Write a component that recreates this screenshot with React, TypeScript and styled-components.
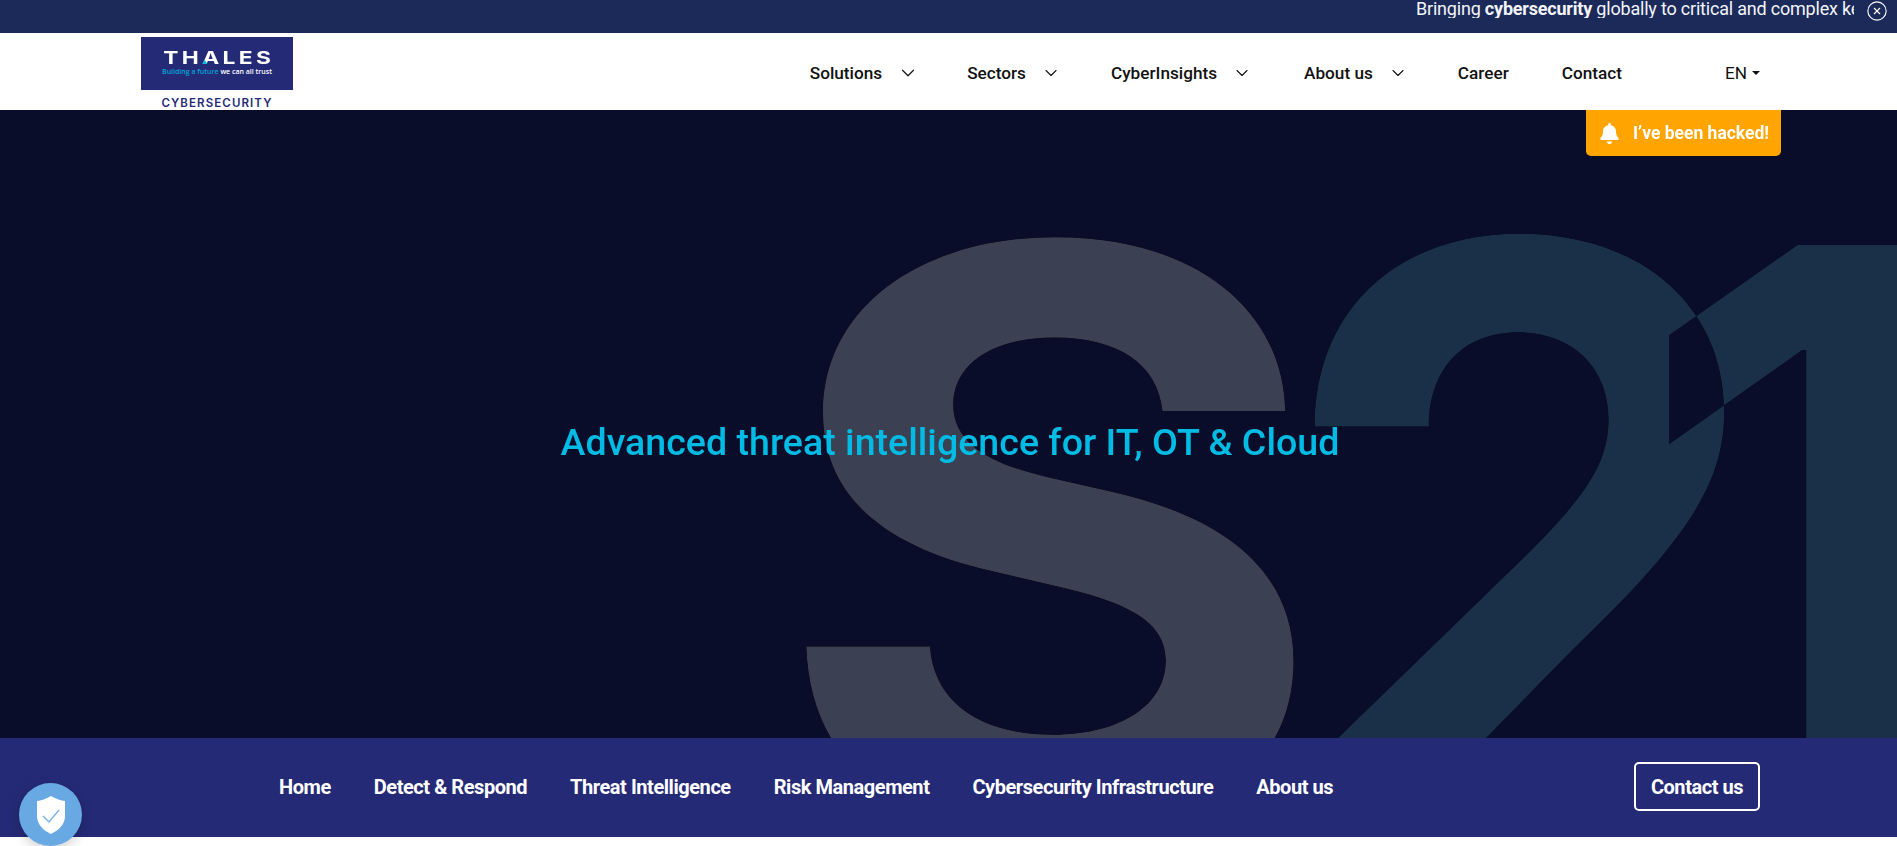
import { createGlobalStyle, styled } from "styled-components";
import { ChevronDown, CircleX } from "lucide-react";
import { FaBell } from "react-icons/fa";

const GlobalStyle = createGlobalStyle`
  html, body {
    margin: 0;
    padding: 0;
    height: 846px;
    overflow: hidden;
    background: #fff;
    font-family: Roboto, "Liberation Sans", sans-serif;
  }
  * {
    box-sizing: border-box;
  }
`;

const TopBar = styled.div`
  display: flex;
  justify-content: flex-end;
  align-items: center;
  height: 33px;
  padding-right: 9px;
  background: #1c2a59;
  color: #f2f4f8;
`;

const Ticker = styled.div`
  width: 438px;
  overflow: hidden;
  white-space: nowrap;
  font-size: 18px;
  line-height: 18px;
  margin-top: -15px;
  height: 18px;
  letter-spacing: -0.2px;
  b {
    font-weight: 700;
  }
`;

const CloseButton = styled.span`
  display: flex;
  margin-left: 12px;
  margin-top: -11px;
  color: #fff;
`;

const Header = styled.header`
  display: flex;
  align-items: center;
  height: 77px;
  padding: 0 137px 0 141px;
  background: #fff;
`;

const Logo = styled.div`
  width: 152px;
  height: 77px;
  padding-top: 4px;
  display: flex;
  flex-direction: column;
  align-items: center;
`;

const LogoBox = styled.div`
  width: 152px;
  height: 53px;
  background: #252a76;
  display: flex;
  flex-direction: column;
  align-items: center;
  padding-top: 14px;
`;

const LogoWord = styled.div`
  position: relative;
  font-family: Inter, "Liberation Sans", sans-serif;
  font-size: 17.5px;
  line-height: 14px;
  font-weight: 700;
  letter-spacing: 2.6px;
  color: #fff;
  margin-right: -3px;
  transform: scaleX(1.3);
  &::after {
    content: "";
    position: absolute;
    left: 30px;
    top: 9px;
    border-left: 2.5px solid transparent;
    border-right: 2.5px solid transparent;
    border-bottom: 4px solid #00bbdd;
  }
`;

const LogoTagline = styled.div`
  margin-top: 2px;
  font-family: "Open Sans", sans-serif;
  font-size: 7px;
  line-height: 10px;
  font-weight: 600;
  white-space: nowrap;
  color: #fff;
  span {
    color: #00a7d8;
  }
`;

const LogoCaption = styled.div`
  margin-top: 7px;
  font-family: Inter, sans-serif;
  font-size: 11.5px;
  line-height: 12px;
  font-weight: 600;
  letter-spacing: 1.1px;
  color: #252a76;
  white-space: nowrap;
`;

const MainNav = styled.nav`
  display: flex;
  align-items: center;
  margin-left: auto;
  padding-top: 2px;
  font-size: 17.2px;
  font-weight: 500;
  color: #111;
`;

const MainNavItem = styled.a<{ $gap: number }>`
  display: flex;
  align-items: center;
  margin-right: ${(p) => p.$gap}px;
  white-space: nowrap;
  svg {
    margin-left: 15px;
  }
`;

const LangPicker = styled.a`
  display: flex;
  align-items: center;
  gap: 5px;
  font-weight: 400;
  margin-left: 103px;
  &::after {
    content: "";
    border-left: 4px solid transparent;
    border-right: 4px solid transparent;
    border-top: 4px solid #111;
  }
`;

const Hero = styled.section`
  position: relative;
  isolation: isolate;
  height: 628px;
  overflow: hidden;
  background: #090d29;
  display: flex;
  justify-content: center;
  align-items: center;
  padding-top: 36px;
  padding-left: 3px;
`;

const BigType = styled.div`
  position: absolute;
  inset: 0;
  z-index: -1;
  background: #000;
  mix-blend-mode: lighten;
  isolation: isolate;
  overflow: hidden;
  display: flex;
  padding: 26px 0 0 771px;
  font-family: Inter, sans-serif;
  font-weight: 700;
  font-size: 800px;
  line-height: 800px;
  white-space: nowrap;
  user-select: none;
`;

const BigGlyph = styled.span<{ $color: string; $gap: number; $scaleX?: number; $scaleY?: number }>`
  display: block;
  height: 800px;
  color: ${(p) => p.$color};
  margin-right: ${(p) => p.$gap}px;
  mix-blend-mode: difference;
  transform-origin: 0 200px;
  transform: scale(${(p) => p.$scaleX ?? 1}, ${(p) => p.$scaleY ?? 1});
`;

const HeroTitle = styled.h1`
  margin: 0;
  font-size: 37.6px;
  line-height: 44px;
  font-weight: 500;
  color: #00bbe3;
  white-space: nowrap;
`;

const HackedButton = styled.a`
  position: absolute;
  top: 0;
  left: 1586px;
  width: 195px;
  height: 46px;
  display: flex;
  align-items: center;
  gap: 13px;
  padding-left: 13px;
  background: #ffa400;
  border-radius: 0 0 5px 5px;
  color: #fff;
  font-size: 17.5px;
  font-weight: 700;
  white-space: nowrap;
`;

const SubNav = styled.nav`
  display: flex;
  align-items: center;
  height: 99px;
  padding: 0 137px 2px 279px;
  background: #252a76;
  color: #fff;
  font-size: 20px;
  font-weight: 700;
  letter-spacing: -0.45px;
`;

const SubNavItem = styled.a`
  margin-right: 43px;
  white-space: nowrap;
`;

const ContactButton = styled.a`
  display: flex;
  align-items: center;
  justify-content: center;
  margin-left: auto;
  width: 126px;
  height: 49px;
  border: 2px solid #fff;
  border-radius: 5px;
  white-space: nowrap;
`;

const PrivacyBadge = styled.div`
  position: fixed;
  left: 19px;
  top: 783px;
  width: 63px;
  height: 63px;
  border-radius: 50%;
  display: flex;
  align-items: center;
  justify-content: center;
  background: #68a9e4;
  box-shadow: 0 3px 12px rgba(0, 0, 0, 0.2);
`;

const mainLinks = [
  { label: "Solutions", gap: 48, chevron: 22 },
  { label: "Sectors", gap: 50, chevron: 20 },
  { label: "CyberInsights", gap: 52, chevron: 20 },
  { label: "About us", gap: 50, chevron: 20 },
  { label: "Career", gap: 53, chevron: 0 },
  { label: "Contact", gap: 0, chevron: 0 },
];

const subLinks = [
  "Home",
  "Detect & Respond",
  "Threat Intelligence",
  "Risk Management",
  "Cybersecurity Infrastructure",
  "About us",
];

export default function App() {
  return (
    <>
      <GlobalStyle />
      <TopBar>
        <Ticker>
          Bringing <b>cybersecurity</b> globally to critical and complex key sectors
        </Ticker>
        <CloseButton>
          <CircleX size={22} strokeWidth={1.2} />
        </CloseButton>
      </TopBar>
      <Header>
        <Logo>
          <LogoBox>
            <LogoWord>THALES</LogoWord>
            <LogoTagline>
              <span>Building a future</span> we can all trust
            </LogoTagline>
          </LogoBox>
          <LogoCaption>CYBERSECURITY</LogoCaption>
        </Logo>
        <MainNav>
          {mainLinks.map((link) => (
            <MainNavItem key={link.label} $gap={link.gap}>
              {link.label}
              {link.chevron > 0 && <ChevronDown size={link.chevron} strokeWidth={1.3} />}
            </MainNavItem>
          ))}
          <LangPicker>EN</LangPicker>
        </MainNav>
      </Header>
      <Hero>
        <BigType aria-hidden="true">
          <BigGlyph $color="#3b4053" $gap={-23} $scaleX={1.065}>S</BigGlyph>
          <BigGlyph $color="#1a3048" $gap={-143} $scaleY={1.035}>2</BigGlyph>
          <BigGlyph $color="#1a3048" $gap={0}>1</BigGlyph>
        </BigType>
        <HeroTitle>Advanced threat intelligence for IT, OT &amp; Cloud</HeroTitle>
        <HackedButton>
          <FaBell size={21} />
          I’ve been hacked!
        </HackedButton>
      </Hero>
      <SubNav>
        {subLinks.map((label) => (
          <SubNavItem key={label}>{label}</SubNavItem>
        ))}
        <ContactButton>Contact us</ContactButton>
      </SubNav>
      <PrivacyBadge>
        <svg width="30" height="40" viewBox="0 0 30 40">
          <path d="M15 1 C20 4 25 5.5 29 6 L29 21 C29 30 22 35.5 15 39 C8 35.5 1 30 1 21 L1 6 C5 5.5 10 4 15 1 Z" fill="#fff" />
          <path d="M7 21 L13 27 L23 15" fill="none" stroke="#7fb4e6" strokeWidth="1.5" />
        </svg>
      </PrivacyBadge>
    </>
  );
}
